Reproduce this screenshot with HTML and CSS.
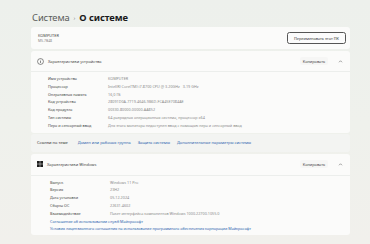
FILE: index.html
```html
<!DOCTYPE html>
<html lang="ru">
<head>
<meta charset="utf-8">
<link rel="stylesheet" href="styles.css">
</head>
<body>
<div class="page">
  <h1 class="title"><span class="crumb">Система</span><span class="sep">›</span><span class="current">О системе</span></h1>

  <div class="card pc">
    <div class="pc-info">
      <div class="pc-name">KOMPUTER</div>
      <div class="pc-model">MS-7B48</div>
    </div>
    <button class="btn-outline">Переименовать этот ПК</button>
  </div>

  <div class="card group">
    <div class="group-head">
      <svg class="icon" viewBox="0 0 10 10" width="7" height="7"><circle cx="5" cy="5" r="4.2" fill="none" stroke="#333" stroke-width="0.8"/><rect x="4.6" y="4.2" width="0.8" height="3" fill="#333"/><circle cx="5" cy="3" r="0.5" fill="#333"/></svg>
      <span class="head-title">Характеристики устройства</span>
      <button class="btn-copy">Копировать</button>
      <svg class="chev" viewBox="0 0 10 10" width="5" height="5"><path d="M2 6.5 L5 3.5 L8 6.5" fill="none" stroke="#444" stroke-width="1"/></svg>
    </div>
    <div class="group-body">
      <div class="row"><span class="k">Имя устройства</span><span class="v">KOMPUTER</span></div>
      <div class="row"><span class="k">Процессор</span><span class="v">Intel(R) Core(TM) i7-8700 CPU @ 3.20GHz&nbsp;&nbsp;&nbsp;3.19 GHz</span></div>
      <div class="row"><span class="k">Оперативная память</span><span class="v">16,0 ГБ</span></div>
      <div class="row"><span class="k">Код устройства</span><span class="v">28091D0A-7719-4646-9B6D-FCA45E7084AE</span></div>
      <div class="row"><span class="k">Код продукта</span><span class="v">00330-80000-00000-AA852</span></div>
      <div class="row"><span class="k">Тип системы</span><span class="v">64-разрядная операционная система, процессор x64</span></div>
      <div class="row"><span class="k">Перо и сенсорный ввод</span><span class="v">Для этого монитора недоступен ввод с помощью пера и сенсорный ввод</span></div>
    </div>
  </div>

  <div class="links">
    <span class="links-label">Ссылки по теме</span>
    <a class="link">Домен или рабочая группа</a>
    <a class="link">Защита системы</a>
    <a class="link">Дополнительные параметры системы</a>
  </div>

  <div class="card group win">
    <div class="group-head">
      <svg class="icon" viewBox="0 0 10 10" width="6" height="6"><rect x="0" y="0" width="4.6" height="4.6" fill="#1c1c1c"/><rect x="5.4" y="0" width="4.6" height="4.6" fill="#1c1c1c"/><rect x="0" y="5.4" width="4.6" height="4.6" fill="#1c1c1c"/><rect x="5.4" y="5.4" width="4.6" height="4.6" fill="#1c1c1c"/></svg>
      <span class="head-title">Характеристики Windows</span>
      <button class="btn-copy">Копировать</button>
      <svg class="chev" viewBox="0 0 10 10" width="5" height="5"><path d="M2 6.5 L5 3.5 L8 6.5" fill="none" stroke="#444" stroke-width="1"/></svg>
    </div>
    <div class="group-body">
      <div class="row"><span class="k">Выпуск</span><span class="v">Windows 11 Pro</span></div>
      <div class="row"><span class="k">Версия</span><span class="v">23H2</span></div>
      <div class="row"><span class="k">Дата установки</span><span class="v">05.12.2024</span></div>
      <div class="row"><span class="k">Сборка ОС</span><span class="v">22631.4602</span></div>
      <div class="row"><span class="k">Взаимодействие</span><span class="v">Пакет интерфейса компонентов Windows 1000.22700.1055.0</span></div>
      <div class="row"><a class="link">Соглашение об использовании служб Майкрософт</a></div>
      <div class="row"><a class="link">Условия лицензионного соглашения на использование программного обеспечения корпорации Майкрософт</a></div>
    </div>
  </div>
</div>
</body>
</html>
```

FILE: styles.css
```css
html, body {
  margin: 0;
  padding: 0;
}
body {
  width: 370px;
  height: 244px;
  overflow: hidden;
  background: linear-gradient(180deg, #edf0ec 0%, #eff1ec 50%, #f1f0ec 100%);
  font-family: "Noto Sans", "Open Sans", sans-serif;
  color: #1f1f1f;
}
.page {
  padding: 8px 0 0 31px;
  width: 319px;
}
.title {
  margin: 0 0 0 1px;
  height: 19px;
  font-size: 9.4px;
  line-height: 14px;
  font-weight: 400;
  display: flex;
  align-items: center;
  gap: 4px;
  letter-spacing: -0.1px;
}
.crumb { color: #5a5c5a; }
.sep { color: #888; font-size: 6px; }
.current { font-weight: 700; color: #1a1a1a; }

.card {
  background: #fbfbfa;
  border-radius: 3px;
}
.pc {
  height: 22px;
  display: flex;
  align-items: center;
  justify-content: space-between;
  padding: 0 4px 0 7px;
}
.pc-info { display: flex; flex-direction: column; gap: 0; }
.pc-name { font-size: 3.9px; line-height: 5.5px; color: #444; }
.pc-model { font-size: 3.4px; line-height: 5px; color: #888; }
.btn-outline {
  font-family: inherit;
  font-size: 3.9px;
  color: #333;
  height: 12px;
  width: 59px;
  padding: 0;
  background: #fbfbfb;
  border: 1px solid #555;
  border-radius: 2.5px;
}

.group { margin-top: 2px; }
.group-head {
  height: 20px;
  display: flex;
  align-items: center;
  padding: 0 6px 0 6px;
  border-bottom: 1px solid #eceeec;
}
.head-title {
  font-size: 4px;
  margin-left: 4px;
  color: #444;
  flex: 1;
}
.btn-copy {
  font-family: inherit;
  font-size: 3.9px;
  color: #444;
  width: 28px;
  height: 8px;
  padding: 0;
  border: none;
  border-radius: 2px;
  background: #f6f6f5;
}
.chev { margin-left: 10px; margin-right: 1px; }

.group-body {
  padding: 3px 0 3px 17px;
}
.row {
  display: grid;
  grid-template-columns: 60px 1fr;
  font-size: 3.75px;
  line-height: 7.8px;
  height: 7.8px;
  white-space: nowrap;
}
.row .k { color: #444; }
.row .v { color: #8a8a8a; }
.row .link { grid-column: 1 / 3; }
.link { color: #2a62ad; }

.links {
  margin-top: 1px;
  height: 18px;
  background: #f3f4f2;
  border-radius: 3px;
  display: flex;
  align-items: center;
  gap: 7px;
  padding-left: 6px;
  font-size: 4px;
}
.links-label { color: #333; margin-right: 3px; }

.win { margin-top: 2px; }
.win .group-head { height: 21px; }
.win .group-body { padding-top: 3px; padding-bottom: 2px; padding-left: 19px; }
```
